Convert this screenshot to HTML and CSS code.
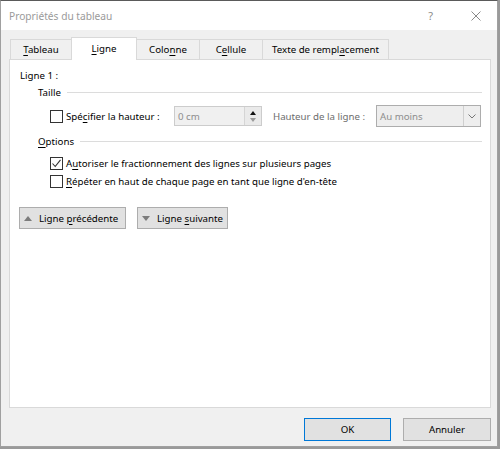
FILE: index.html
```html
<!DOCTYPE html>
<html lang="fr">
<head>
<meta charset="utf-8">
<title>Propriétés du tableau</title>
<link rel="stylesheet" href="styles.css">
</head>
<body>
<div class="dialog">
  <div class="titlebar">
    <span class="title">Propriétés du tableau</span>
    <span class="help">?</span>
    <svg class="close" width="10" height="10" viewBox="0 0 10 10"><path d="M0.5 0.5L9.5 9.5M9.5 0.5L0.5 9.5" stroke="#8a8a8a" stroke-width="1" fill="none"/></svg>
  </div>
  <div class="content">
    <div class="tabs">
      <div class="tab t-tableau"><span><u>T</u>ableau</span></div>
      <div class="tab active t-ligne"><span><u>L</u>igne</span></div>
      <div class="tab t-colonne"><span>Colo<u>n</u>ne</span></div>
      <div class="tab t-cellule"><span>C<u>e</u>llule</span></div>
      <div class="tab t-texte"><span>Texte de rempl<u>a</u>cement</span></div>
    </div>
    <div class="panel">
      <div class="heading">Ligne 1 :</div>
      <div class="legend legend-taille"><span>Taille</span><span class="rule"></span></div>
      <div class="size-row">
        <label class="check-label size-check"><span class="box"></span><span>Spé<u>c</u>ifier la hauteur :</span></label>
        <div class="spin">
          <span class="spin-value">0 cm</span>
          <span class="spin-btns"><span class="arrow-up"></span><span class="arrow-down"></span></span>
        </div>
        <span class="dim-label">Hauteur de la ligne :</span>
        <div class="select">
          <span class="select-value">Au moins</span>
          <span class="select-btn"><svg width="8" height="5" viewBox="0 0 8 5"><path d="M0.5 0.5L4 4L7.5 0.5" stroke="#777" fill="none" stroke-width="1"/></svg></span>
        </div>
      </div>
      <div class="legend legend-options"><span><u>O</u>ptions</span><span class="rule"></span></div>
      <label class="check-label opt-row first"><span class="box checked"><svg width="11" height="11" viewBox="0 0 11 11"><path d="M1.5 5.5L4.2 8.5L9.5 1.8" stroke="#333" stroke-width="1.1" fill="none"/></svg></span><span>A<u>u</u>toriser le fractionnement des lignes sur plusieurs pages</span></label>
      <label class="check-label opt-row"><span class="box"></span><span><u>R</u>épéter en haut de chaque page en tant que ligne d'en-tête</span></label>
      <div class="nav-buttons">
        <button class="btn nav prev"><span class="tri-up"></span><span>Ligne <u>p</u>récédente</span></button>
        <button class="btn nav next"><span class="tri-down"></span><span>Ligne <u>s</u>uivante</span></button>
      </div>
    </div>
    <div class="footer">
      <button class="btn action default">OK</button>
      <button class="btn action">Annuler</button>
    </div>
  </div>
</div>
</body>
</html>
```

FILE: styles.css
```css
* { box-sizing: border-box; }
html, body { margin: 0; padding: 0; }
body {
  width: 500px;
  height: 449px;
  background: #9a9a9a;
  font-family: "Noto Sans", "Open Sans", sans-serif;
  font-size: 9.7px;
  color: #000;
  overflow: hidden;
}
u { text-decoration: underline; text-underline-offset: 1.5px; }

.dialog {
  width: 498px;
  height: 447px;
  border: 1px solid #a0a0a0;
  border-top-color: #5a5a5a;
  background: #f0f0f0;
  display: flex;
  flex-direction: column;
}

.titlebar {
  height: 29px;
  background: #fff;
  display: flex;
  align-items: center;
  padding-left: 8px;
  flex: none;
}
.title { color: #9a9a9a; font-size: 10.2px; flex: 1; }
.help { color: #8a8a8a; font-size: 11px; margin-right: 38px; }
.close { margin-right: 16px; }

.content {
  flex: 1;
  display: flex;
  flex-direction: column;
  padding: 7px 6px 5px 8px;
}

.tabs {
  display: flex;
  align-items: flex-end;
  height: 22px;
  padding-left: 1px;
  position: relative;
  z-index: 1;
}
.tab {
  height: 20px;
  border: 1px solid #d9d9d9;
  border-bottom: none;
  margin-right: -1px;
  background: #f0f0f0;
  display: flex;
  align-items: center;
  justify-content: center;
  white-space: nowrap;
}
.tab.active {
  height: 23px;
  background: #fff;
  margin-bottom: -1px;
  padding-bottom: 2px;
  position: relative;
}
.t-tableau { width: 62px; }
.t-ligne { width: 66px; }
.t-colonne { width: 64px; }
.t-cellule { width: 64px; }
.t-texte { width: 127px; }

.panel {
  flex: 1;
  background: #fff;
  border: 1px solid #d9d9d9;
  padding: 8px 8px 0 10px;
  display: flex;
  flex-direction: column;
}
.heading { line-height: 15px; }

.legend {
  display: flex;
  align-items: center;
  margin-left: 18px;
  line-height: 15px;
}
.legend .rule {
  flex: 1;
  height: 1px;
  background: #dcdcdc;
  margin-left: 6px;
}
.legend-taille { margin-top: 2px; }
.legend-options { margin-top: 7px; }

.size-row {
  display: flex;
  align-items: center;
  margin-top: 5px;
  height: 22px;
  padding-left: 30px;
}
.check-label {
  display: flex;
  align-items: center;
  white-space: nowrap;
}
.box {
  width: 13px;
  height: 13px;
  border: 1px solid #333;
  background: #fff;
  margin-right: 3px;
  flex: none;
  display: flex;
  align-items: center;
  justify-content: center;
}
.size-check { width: 124px; }

.spin {
  width: 88px;
  height: 20px;
  border: 1px solid #cccccc;
  background: #f0f0f0;
  display: flex;
  align-items: center;
}
.spin-value { flex: 1; color: #8d8d8d; padding-left: 3px; }
.spin-btns {
  width: 17px;
  height: 100%;
  border-left: 1px solid #d5d5d5;
  background: #eaeaea;
  display: flex;
  flex-direction: column;
  align-items: center;
  justify-content: center;
  gap: 3px;
}
.arrow-up, .arrow-down {
  width: 0; height: 0;
  border-left: 3.5px solid transparent;
  border-right: 3.5px solid transparent;
}
.arrow-up { border-bottom: 4px solid #111; }
.arrow-down { border-top: 4px solid #9a9a9a; }

.dim-label { color: #6d6d6d; margin-left: 11px; width: 103px; white-space: nowrap; }

.select {
  width: 105px;
  height: 22px;
  border: 1px solid #adadad;
  background: #eeeeee;
  display: flex;
  align-items: center;
}
.select-value { flex: 1; color: #8d8d8d; padding-left: 3px; }
.select-btn {
  width: 17px;
  height: 100%;
  border-left: 1px solid #cfcfcf;
  display: flex;
  align-items: center;
  justify-content: center;
}

.opt-row { padding-left: 30px; height: 18px; }
.opt-row.first { margin-top: 5px; }

.nav-buttons {
  display: flex;
  gap: 11px;
  margin-top: 17px;
  margin-left: -1px;
}
.btn {
  font: inherit;
  color: #000;
  background: #e1e1e1;
  border: 1px solid #adadad;
  border-radius: 0;
  padding: 0;
  margin: 0;
}
.nav {
  height: 22px;
  display: flex;
  align-items: center;
  padding-left: 4px;
  white-space: pre;
}
.prev { width: 107px; }
.next { width: 91px; }
.tri-up, .tri-down {
  width: 0; height: 0;
  border-left: 4.5px solid transparent;
  border-right: 4.5px solid transparent;
  margin-right: 7px;
}
.tri-up { border-bottom: 5px solid #7c7c7c; }
.tri-down { border-top: 5px solid #7c7c7c; }

.footer {
  display: flex;
  justify-content: flex-end;
  gap: 12px;
  margin-top: 10px;
}
.action { width: 88px; height: 23px; }
.default { border-color: #0078d7; width: 87px; }
```
